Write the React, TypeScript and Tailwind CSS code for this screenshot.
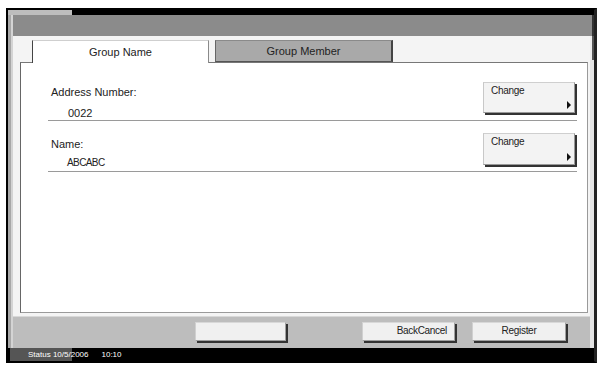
import React from "react";

const font = { fontFamily: '"Liberation Sans", Arial, sans-serif' };

function Btn({ w, h, children, className = "" }: { w: string; h: string; children?: React.ReactNode; className?: string }) {
  return (
    <div
      className={`${w} ${h} ${className} bg-[#f0f0f0] border border-[#a0a0a0] border-t-[#d8d8d8] border-l-[#d0d0d0] shadow-[2px_2px_0_#333]`}
    >
      {children}
    </div>
  );
}

function ChangeBtn({ h }: { h: string }) {
  return (
    <div
      className={`w-[92px] ${h} bg-[#f3f3f3] border border-[#999] border-t-[#cfcfcf] border-l-[#c8c8c8] shadow-[2px_2px_0_#333] flex flex-col justify-between`}
    >
      <div className="pl-[7px] pt-[1px] text-[10px] leading-[13px] tracking-[-0.3px] text-[#222]">Change</div>
      <div className="self-end mr-[3px] mb-[3px] w-0 h-0 border-y-[4px] border-y-transparent border-l-[4px] border-l-[#111]" />
    </div>
  );
}

export default function App() {
  return (
    <div className="w-[601px] h-[368px] bg-white pt-[8px] pl-[6px]" style={font}>
      <div className="w-[591px] h-[355px] border-l-2 border-t-2 border-b-2 border-r-[3px] border-black border-r-[#222] flex flex-col">
        {/* top strip */}
        <div className="h-[5px] flex">
          <div className="w-[64px] bg-[#bdbdbd]" />
          <div className="flex-1 bg-black" />
        </div>
        {/* middle */}
        <div className="h-[333px] flex">
          {/* left strip */}
          <div className="w-[5px] flex">
            <div className="w-[3px] bg-[#a8a8a8]" />
            <div className="w-[2px] bg-[#d4d4d4]" />
          </div>
          {/* center */}
          <div className="w-[577px] flex flex-col">
            <div className="h-[21px] bg-[#8b8b8b]" />
            {/* main */}
            <div className="h-[280px] bg-[#f4f4f4] pl-[7px] pr-[2px] pt-[4px] pb-[3px] flex flex-col">
              <div className="h-[22px] flex pl-[12px] gap-[6px] text-[11px] text-[#222]">
                <div className="relative z-10 w-[177px] h-[23px] bg-white border-l border-l-[#444] border-t border-t-[#cfcfcf] border-r border-r-[#8a8a8a] flex items-center justify-center leading-[13px] pt-[1px]">
                  Group Name
                </div>
                <div className="w-[178px] h-[22px] bg-[#a9a9a9] border-l border-l-[#666] border-t border-t-[#8a8a8a] border-r-2 border-r-[#444] border-b border-b-[#555] flex items-center justify-center leading-[13px]">
                  Group Member
                </div>
              </div>
              <div className="flex-1 bg-white border border-[#9a9a9a] border-l-[#666] border-t-[#777] pl-[27px] pr-[10px] text-[#222]">
                {/* row 1 */}
                <div className="mt-[18px] h-[40px] border-b border-[#9a9a9a] flex justify-between items-start">
                  <div className="pl-[3px] pt-[5px] text-[11px] leading-[13px]">
                    <div>Address Number:</div>
                    <div className="mt-[8px] pl-[17px]">0022</div>
                  </div>
                  <div className="mt-[1px] mr-[2px]">
                    <ChangeBtn h="h-[31px]" />
                  </div>
                </div>
                {/* row 2 */}
                <div className="h-[51px] border-b border-[#9a9a9a] flex justify-between items-start">
                  <div className="pl-[3px] pt-[17px] text-[11px] leading-[13px]">
                    <div>Name:</div>
                    <div className="mt-[5px] pl-[16px] text-[10px] tracking-[-0.6px]">ABCABC</div>
                  </div>
                  <div className="mt-[12px] mr-[2px]">
                    <ChangeBtn h="h-[32px]" />
                  </div>
                </div>
              </div>
            </div>
            {/* bottom bar */}
            <div className="h-[32px] bg-[#bdbdbd] border-t border-t-[#d8d8d8] pl-[182px] pt-[5px] flex items-start text-[10px] tracking-[-0.3px] text-[#222]">
              <Btn w="w-[91px]" h="h-[19px]" />
              <Btn w="w-[93px]" h="h-[19px]" className="ml-[76px] flex justify-end pr-[7px] leading-[15px]">
                BackCancel
              </Btn>
              <Btn w="w-[94px]" h="h-[19px]" className="ml-[17px] flex justify-center leading-[15px]">
                Register
              </Btn>
            </div>
          </div>
          {/* right strip */}
          <div className="w-[4px] flex flex-col">
            <div className="h-[21px] flex">
              <div className="w-[2px] bg-[#8b8b8b]" />
              <div className="w-[2px] bg-[#333]" />
            </div>
            <div className="h-[24px] flex">
              <div className="w-[2px] bg-[#ececec]" />
              <div className="w-[2px] bg-[#555]" />
            </div>
            <div className="flex-1 bg-[#e4e4e4]" />
          </div>
        </div>
        {/* status bar */}
        <div className="h-[13px] bg-[linear-gradient(to_right,#000_2px,#555_2px,#555_64px,#000_64px)] pl-[20px] text-[8px] leading-[13px] text-white">
          <span>Status 10/5/2006</span>
          <span className="ml-[13px]">10:10</span>
        </div>
      </div>
    </div>
  );
}
